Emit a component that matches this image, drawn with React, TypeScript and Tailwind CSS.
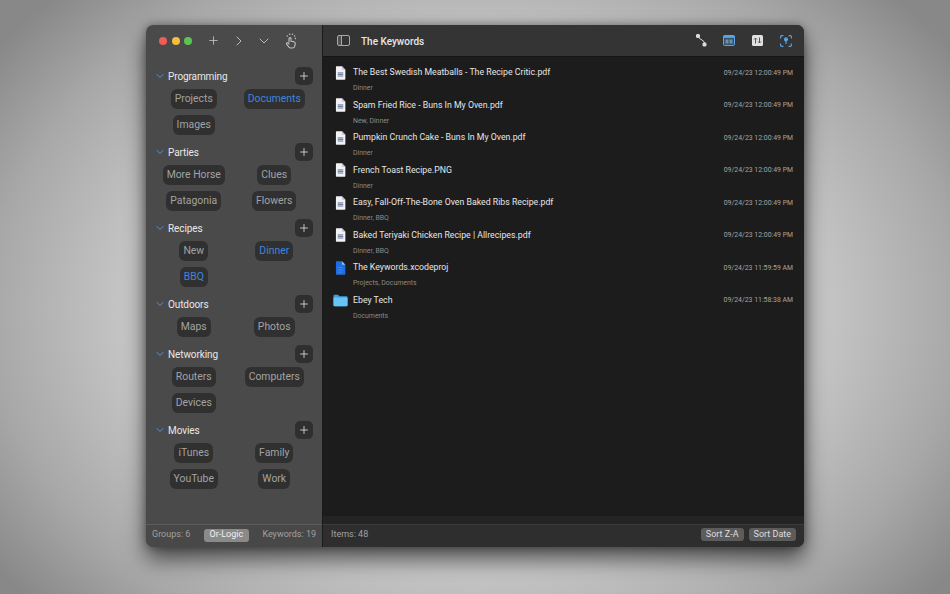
import React from "react";
import { Plus, ChevronRight, ChevronDown } from "lucide-react";

const groups: { name: string; items: { t: string; blue?: boolean }[] }[] = [
  { name: "Programming", items: [{ t: "Projects" }, { t: "Documents", blue: true }, { t: "Images" }] },
  { name: "Parties", items: [{ t: "More Horse" }, { t: "Clues" }, { t: "Patagonia" }, { t: "Flowers" }] },
  { name: "Recipes", items: [{ t: "New" }, { t: "Dinner", blue: true }, { t: "BBQ", blue: true }] },
  { name: "Outdoors", items: [{ t: "Maps" }, { t: "Photos" }] },
  { name: "Networking", items: [{ t: "Routers" }, { t: "Computers" }, { t: "Devices" }] },
  { name: "Movies", items: [{ t: "iTunes" }, { t: "Family" }, { t: "YouTube" }, { t: "Work" }] },
];

const files: { name: string; tags: string; time: string; icon: "doc" | "xcode" | "folder" }[] = [
  { name: "The Best Swedish Meatballs - The Recipe Critic.pdf", tags: "Dinner", time: "09/24/23 12:00:49 PM", icon: "doc" },
  { name: "Spam Fried Rice - Buns In My Oven.pdf", tags: "New, Dinner", time: "09/24/23 12:00:49 PM", icon: "doc" },
  { name: "Pumpkin Crunch Cake - Buns In My Oven.pdf", tags: "Dinner", time: "09/24/23 12:00:49 PM", icon: "doc" },
  { name: "French Toast Recipe.PNG", tags: "Dinner", time: "09/24/23 12:00:49 PM", icon: "doc" },
  { name: "Easy, Fall-Off-The-Bone Oven Baked Ribs Recipe.pdf", tags: "Dinner, BBQ", time: "09/24/23 12:00:49 PM", icon: "doc" },
  { name: "Baked Teriyaki Chicken Recipe | Allrecipes.pdf", tags: "Dinner, BBQ", time: "09/24/23 12:00:49 PM", icon: "doc" },
  { name: "The Keywords.xcodeproj", tags: "Projects, Documents", time: "09/24/23 11:59:59 AM", icon: "xcode" },
  { name: "Ebey Tech", tags: "Documents", time: "09/24/23 11:58:38 AM", icon: "folder" },
];

function FileIcon({ kind }: { kind: "doc" | "xcode" | "folder" }) {
  if (kind === "folder") {
    return (
      <svg width="15" height="13" viewBox="0 0 15 13">
        <path d="M0.5 2 Q0.5 0.8 1.7 0.8 H5 L6.4 2.2 H13.3 Q14.5 2.2 14.5 3.4 V11 Q14.5 12.2 13.3 12.2 H1.7 Q0.5 12.2 0.5 11 Z" fill="#3f9fdf" />
        <path d="M0.5 3.6 H14.5 V11 Q14.5 12.2 13.3 12.2 H1.7 Q0.5 12.2 0.5 11 Z" fill="#68c3f7" />
      </svg>
    );
  }
  if (kind === "xcode") {
    return (
      <svg width="11" height="14" viewBox="0 0 12 15" preserveAspectRatio="none">
        <path d="M1 1 Q1 0.3 1.7 0.3 H7.6 L11.3 4 V14 Q11.3 14.7 10.6 14.7 H1.7 Q1 14.7 1 14 Z" fill="#1f6de0" />
        <path d="M7.6 0.3 L11.3 4 H7.6 Z" fill="#8cbcf5" />
        <path d="M3 7 H8 M3 9.5 H9 M3 12 H7" stroke="#3d8af0" strokeWidth="1" />
      </svg>
    );
  }
  return (
    <svg width="11" height="14" viewBox="0 0 12 15" preserveAspectRatio="none">
      <path d="M1 1 Q1 0.3 1.7 0.3 H7.6 L11.3 4 V14 Q11.3 14.7 10.6 14.7 H1.7 Q1 14.7 1 14 Z" fill="#f2f2f5" />
      <path d="M7.6 0.3 L11.3 4 H7.6 Z" fill="#c4c4c8" />
      <rect x="3" y="6.5" width="6" height="1.1" fill="#9aa2b2" />
      <rect x="3" y="8" width="6" height="2.2" fill="#6a82b0" />
      <rect x="3" y="10.8" width="6" height="1" fill="#a8adb8" />
    </svg>
  );
}

function TapIcon() {
  return (
    <svg width="14" height="16" viewBox="0 0 14 16" fill="none" stroke="#c4c4c4" strokeWidth="1.1" strokeLinecap="round" strokeLinejoin="round">
      <path d="M5 9 V5.6 Q5 4.6 6 4.6 Q7 4.6 7 5.6 V8.2 L10 8.8 Q11.4 9.2 11.2 10.8 L10.8 13 Q10.5 15 8.6 15 H6.8 Q5.6 15 4.8 14 L2.6 11.2 Q2.2 10.2 3.2 9.8 Q4 9.6 5 10.8" />
      <path d="M3.2 3 h.01 M5.6 1.2 h.01 M8.4 1.2 h.01 M10.6 3 h.01 M11.4 5.4 h.01" strokeWidth="1.5" />
    </svg>
  );
}

export default function App() {
  return (
    <div className="w-[950px] h-[594px] overflow-hidden pt-[25px] pl-[146px] bg-[radial-gradient(ellipse_62%_75%_at_50%_52%,#d6d6d6_0%,#c4c4c4_60%,#a8a8a8_82%,#888888_100%)] font-['Roboto','Liberation_Sans',sans-serif]">
      <div className="w-[658px] h-[522px] flex rounded-[7px] overflow-hidden shadow-[0_12px_22px_rgba(0,0,0,0.6),0_0_8px_rgba(0,0,0,0.35)]">
        <aside className="w-[177px] flex flex-col bg-[#4a4a4a] border-r border-[#1a1a1a]">
          <div className="h-[31px] flex items-center pl-[13px] shrink-0">
            <span className="w-[8px] h-[8px] rounded-full bg-[#ec5e57]" />
            <span className="w-[8px] h-[8px] rounded-full bg-[#f4bd3b] ml-[4.5px]" />
            <span className="w-[8px] h-[8px] rounded-full bg-[#5fc351] ml-[4.5px]" />
            <Plus size={13} strokeWidth={1.4} className="text-[#cccccc] ml-[15px]" />
            <ChevronRight size={16} strokeWidth={1.3} className="text-[#cccccc] ml-[11px]" />
            <ChevronDown size={16} strokeWidth={1.3} className="text-[#cccccc] ml-[9px]" />
            <span className="ml-[12px] flex"><TapIcon /></span>
          </div>
          <div className="flex-1 pt-[10.5px] px-[7.5px]">
            {groups.map((g) => (
              <section key={g.name} className="mb-[8px]">
                <div className="h-[18px] flex items-center">
                  <ChevronDown size={12} strokeWidth={1.8} className="text-[#5a9ae6]" />
                  <span className="ml-[2.5px] pt-[1px] text-[10px] tracking-[-0.1px] text-[#e8e8e8] flex-1">{g.name}</span>
                  <span className="w-[18px] h-[18px] mr-[2px] rounded-[5px] bg-[#2f2f2f] flex items-center justify-center">
                    <Plus size={12} strokeWidth={1.6} className="text-[#e4e4e4]" />
                  </span>
                </div>
                <div className="grid grid-cols-2 gap-y-[6px] mt-[4px]">
                  {g.items.map((i) => (
                    <div key={i.t} className="flex justify-center">
                      <span className={`h-[20px] px-[4px] pt-[1px] rounded-[6px] bg-[#303030] flex items-center text-[10.4px] ${i.blue ? "text-[#3f86dc]" : "text-[#a3a3a3]"}`}>
                        {i.t}
                      </span>
                    </div>
                  ))}
                </div>
              </section>
            ))}
          </div>
          <div className="h-[23px] pb-[2px] border-t border-[#5c5c5c] bg-[#484848] flex items-center justify-between pl-[6px] pr-[6px] text-[9px] text-[#a0a0a0] shrink-0">
            <span>Groups: 6</span>
            <span className="h-[13px] px-[5.5px] rounded-[3px] bg-[#8a8a8a] text-[#f0f0f0] flex items-center">Or-Logic</span>
            <span>Keywords: 19</span>
          </div>
        </aside>
        <main className="flex-1 flex flex-col bg-[#1c1c1c]">
          <header className="h-[32px] bg-[#343434] border-b border-[#151515] flex items-center pl-[14px] pr-[12px] shrink-0">
            <svg width="13" height="11" viewBox="0 0 13 11" fill="none" stroke="#a8a8a8" strokeWidth="1">
              <rect x="0.5" y="0.5" width="12" height="10" rx="1.5" />
              <path d="M4.5 0.5 V10.5" />
              <path d="M1 1 H4.5 V10 H1 Z" fill="#a8a8a8" fillOpacity="0.25" stroke="none" />
            </svg>
            <span className="ml-[11px] pt-[1px] text-[10px] font-medium text-[#e6e6e6] flex-1">The Keywords</span>
            <svg width="11" height="13" viewBox="0 0 11 13" fill="none" stroke="#dcdcdc" strokeWidth="1">
              <path d="M2 2 Q3 5 6 6 Q8.5 7 9 10.5" />
              <rect x="0.5" y="0.5" width="3" height="3" fill="#dcdcdc" rx="0.6" />
              <rect x="7" y="9" width="3" height="3" fill="#dcdcdc" rx="0.6" />
            </svg>
            <svg className="ml-[16px]" width="12" height="11" viewBox="0 0 12 11" fill="none">
              <rect x="0.5" y="0.5" width="11" height="10" rx="1.2" stroke="#58a6e8" strokeWidth="1" fill="#2f5370" />
              <rect x="0.5" y="0.5" width="11" height="2.4" fill="#58a6e8" />
              <rect x="2.5" y="4.5" width="3" height="4" fill="#7a8c9c" />
              <rect x="6.5" y="4.5" width="3" height="4" fill="#7a8c9c" />
            </svg>
            <svg className="ml-[17px]" width="11" height="11" viewBox="0 0 11 11" fill="none">
              <rect width="11" height="11" rx="1.5" fill="#e0e0e0" />
              <path d="M3.5 8.5 V3 M2 4.5 L3.5 3 L5 4.5 M7.5 2.5 V8 M6 6.5 L7.5 8 L9 6.5" stroke="#555" strokeWidth="1" />
            </svg>
            <svg className="ml-[17px]" width="12" height="12" viewBox="0 0 12 12" fill="none" stroke="#58a6e8" strokeWidth="1.1">
              <path d="M0.6 3.4 V1.8 Q0.6 0.6 1.8 0.6 H3.4 M8.6 0.6 H10.2 Q11.4 0.6 11.4 1.8 V3.4 M11.4 8.6 V10.2 Q11.4 11.4 10.2 11.4 H8.6 M3.4 11.4 H1.8 Q0.6 11.4 0.6 10.2 V8.6" />
              <circle cx="6" cy="4.4" r="1.5" fill="#58a6e8" />
              <path d="M6 5.5 V9" />
            </svg>
          </header>
          <div className="flex-1 pt-[6px] pl-[10px] pr-[11px]">
            {files.map((f) => (
              <div key={f.name} className="h-[32.5px] flex">
                <div className="w-[15px] h-[19px] flex items-center justify-center mr-[5px]">
                  <FileIcon kind={f.icon} />
                </div>
                <div className="flex-1 min-w-0">
                  <div className="h-[19px] pt-[1px] flex items-center justify-between">
                    <span className="text-[8.75px] text-[#e6e6e6] whitespace-nowrap">{f.name}</span>
                    <span className="text-[6.9px] text-[#a4a4a4] whitespace-nowrap">{f.time}</span>
                  </div>
                  <div className="h-[13px] flex items-center text-[6.9px] text-[#8a8a8a]">{f.tags}</div>
                </div>
              </div>
            ))}
          </div>
          <div className="h-[8px] bg-[#242424] shrink-0" />
          <div className="h-[23px] pb-[3px] bg-[#2e2e2e] border-t border-[#3b3b3b] flex items-center pl-[8px] pr-[8px] text-[9px] shrink-0">
            <span className="text-[#a0a0a0] flex-1">Items: 48</span>
            <span className="h-[13px] px-[5px] rounded-[3px] bg-[#5c5c5c] text-[#dedede] flex items-center">Sort Z-A</span>
            <span className="h-[13px] px-[5px] ml-[5px] rounded-[3px] bg-[#5c5c5c] text-[#dedede] flex items-center">Sort Date</span>
          </div>
        </main>
      </div>
    </div>
  );
}
